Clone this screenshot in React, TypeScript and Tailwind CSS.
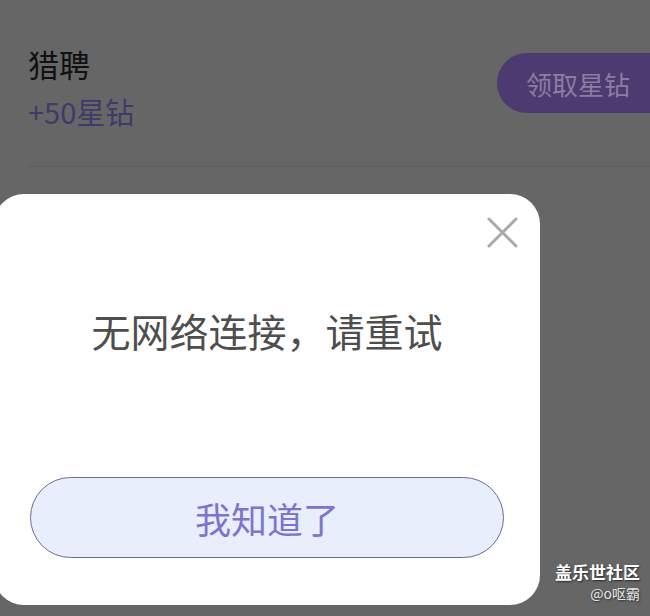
import React from 'react';

const font = { fontFamily: '"Noto Sans CJK SC", "Noto Sans", sans-serif' };

const App: React.FC = () => {
    return (
        <div className="relative h-[616px] w-[650px] overflow-hidden bg-[#666666]" style={font}>
            {/* dimmed list behind the dialog */}
            <div className="ml-[28px] flex justify-between border-b border-[#5e5e5e] pt-[44px] pb-[35px]">
                <div className="flex flex-col gap-[7px]">
                    <span className="text-[31px] leading-[40px] text-[#111111]">猎聘</span>
                    <span className="text-[29px] leading-[40px] text-[#3e3a6a]">+50星钻</span>
                </div>
                <button className="mr-[-40px] mt-[9px] flex h-[60px] items-center self-start rounded-full bg-[#4d3a70] pl-[29px] pr-[60px] text-[26px] text-[#8a7ea2]">
                    领取星钻
                </button>
            </div>

            {/* dialog */}
            <div className="absolute left-[-6px] top-[194px] flex h-[411px] w-[546px] flex-col rounded-[30px] bg-white px-[36px] pb-[47px]">
                <button className="absolute right-[22px] top-[23px] h-[31px] w-[31px]" aria-label="关闭">
                    <svg viewBox="0 0 31 31" className="h-full w-full" fill="none" stroke="#a9a9a9" strokeWidth="3" strokeLinecap="round">
                        <path d="M2 2L29 29M29 2L2 29" />
                    </svg>
                </button>
                <div className="pt-[112px] text-center text-[39px] leading-[48px] text-[#4e4e4e]">
                    无网络连接，请重试
                </div>
                <button className="mt-auto flex h-[81px] w-full items-center justify-center rounded-full border border-[#6a6a9a] bg-[#e9eefc] text-[36px] text-[#7b75cc]">
                    我知道了
                </button>
            </div>

            {/* watermark */}
            <div className="absolute right-[10px] top-[562px] flex flex-col items-end text-white [text-shadow:1px_1px_2px_rgba(0,0,0,0.6)]">
                <span className="text-[17px] font-bold leading-[20px]">盖乐世社区</span>
                <span className="mt-[1px] text-[14px] leading-[20px] text-[#e6e6e6]">@o呕霸</span>
            </div>
        </div>
    );
};

export default App;
